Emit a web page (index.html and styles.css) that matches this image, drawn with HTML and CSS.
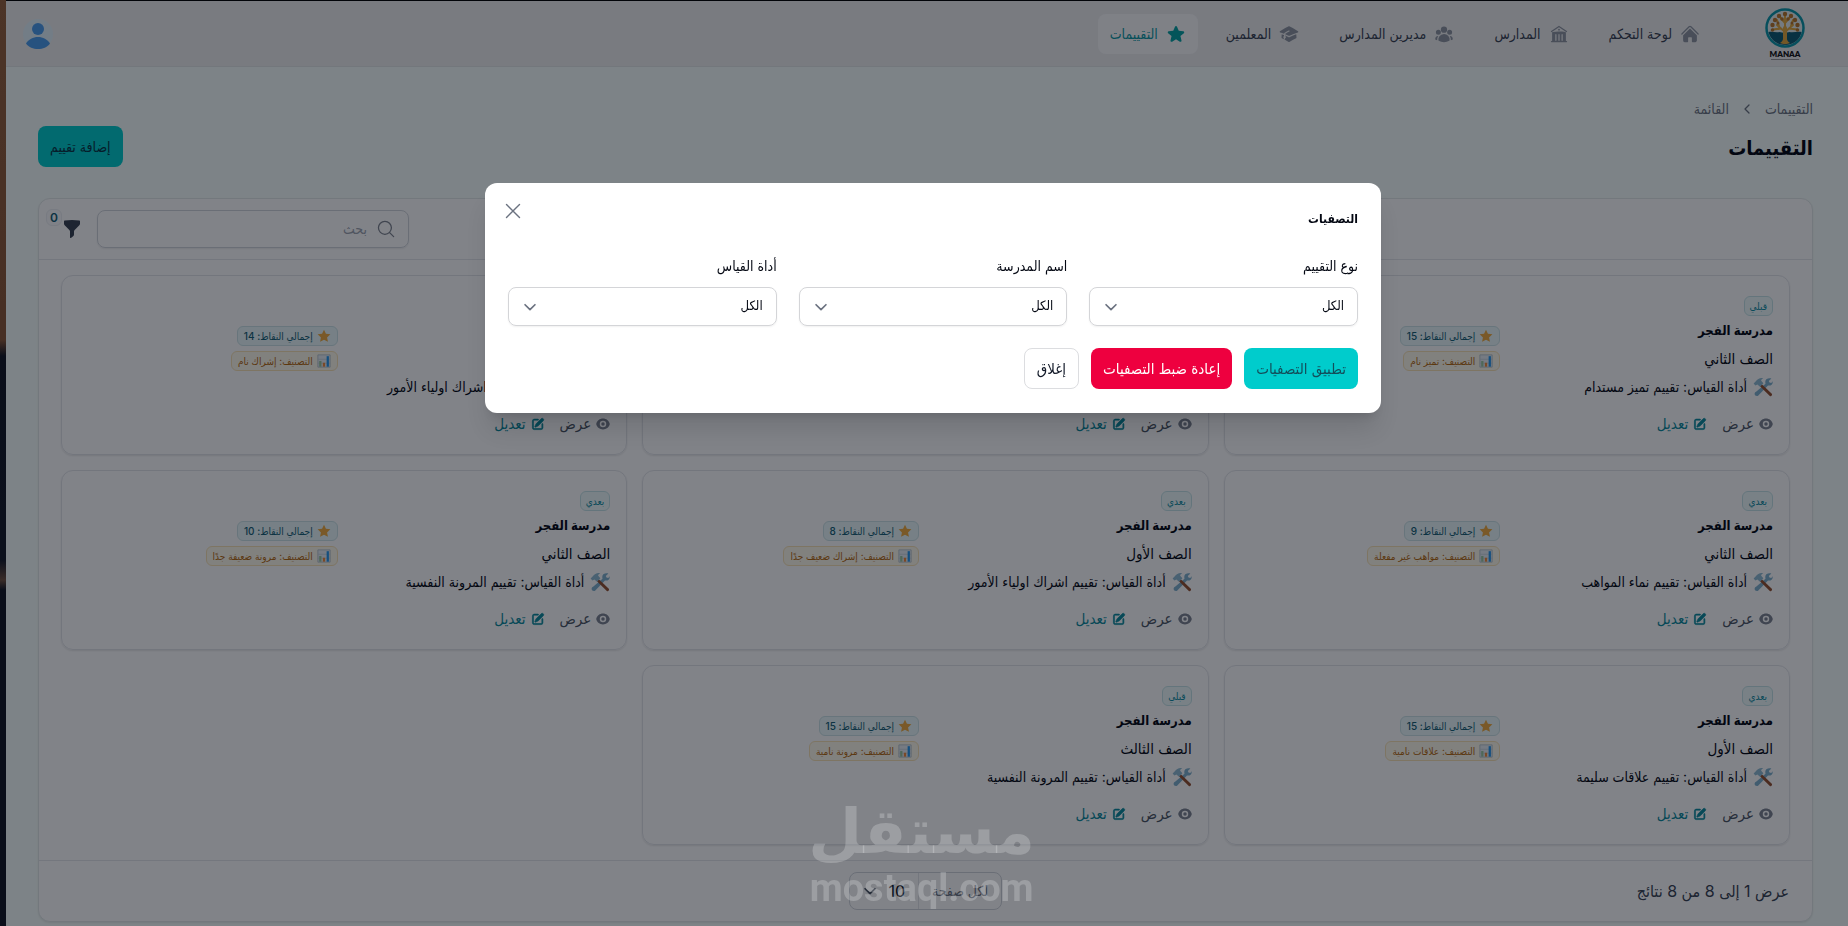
FILE: index.html
```html
<!DOCTYPE html>
<html lang="ar" dir="rtl">
<head>
<meta charset="utf-8">
<title>التقييمات</title>
<link rel="stylesheet" href="styles.css">
</head>
<body>
<svg class="sprite" aria-hidden="true">
  <symbol id="home" viewBox="0 0 24 24"><path d="M11.47 3.841a.75.75 0 0 1 1.06 0l8.69 8.69a.75.75 0 1 0 1.06-1.061l-8.689-8.69a2.25 2.25 0 0 0-3.182 0l-8.69 8.69a.75.75 0 1 0 1.061 1.06l8.69-8.689Z"/><path d="m12 5.432 8.159 8.159c.03.03.06.058.091.086v6.198c0 1.035-.84 1.875-1.875 1.875H15a.75.75 0 0 1-.75-.75v-4.5a.75.75 0 0 0-.75-.75h-3a.75.75 0 0 0-.75.75V21a.75.75 0 0 1-.75.75H5.625a1.875 1.875 0 0 1-1.875-1.875v-6.198a2.29 2.29 0 0 0 .091-.086L12 5.432Z"/></symbol>
  <symbol id="library" viewBox="0 0 24 24"><path d="M11.584 2.376a.75.75 0 0 1 .832 0l9 6a.75.75 0 1 1-.832 1.248L12 3.901 3.416 9.624a.75.75 0 0 1-.832-1.248l9-6Z"/><path fill-rule="evenodd" d="M20.25 10.332v9.918H21a.75.75 0 0 1 0 1.5H3a.75.75 0 0 1 0-1.5h.75v-9.918a.75.75 0 0 1 .634-.74A49.109 49.109 0 0 1 12 9c2.59 0 5.134.202 7.616.592a.75.75 0 0 1 .634.74Zm-7.5 2.418a.75.75 0 0 0-1.5 0v6.75a.75.75 0 0 0 1.5 0v-6.75Zm3-.75a.75.75 0 0 1 .75.75v6.75a.75.75 0 0 1-1.5 0v-6.75a.75.75 0 0 1 .75-.75ZM9 12.75a.75.75 0 0 0-1.5 0v6.75a.75.75 0 0 0 1.5 0v-6.75Z"/><path d="M12 7.875a1.125 1.125 0 1 0 0-2.25 1.125 1.125 0 0 0 0 2.25Z"/></symbol>
  <symbol id="group" viewBox="0 0 24 24"><path d="M8.25 6.75a3.75 3.75 0 1 1 7.5 0 3.75 3.75 0 0 1-7.5 0ZM15.75 9.75a3 3 0 1 1 6 0 3 3 0 0 1-6 0ZM2.25 9.75a3 3 0 1 1 6 0 3 3 0 0 1-6 0ZM6.31 15.117A6.745 6.745 0 0 1 12 12a6.745 6.745 0 0 1 6.709 7.498.75.75 0 0 1-.372.568A12.696 12.696 0 0 1 12 21.75c-2.305 0-4.47-.612-6.337-1.684a.75.75 0 0 1-.372-.568 6.787 6.787 0 0 1 1.019-4.38Z"/><path d="M5.082 14.254a8.287 8.287 0 0 0-1.308 5.135 9.687 9.687 0 0 1-1.764-.44l-.115-.04a.563.563 0 0 1-.373-.487l-.01-.121a3.75 3.75 0 0 1 3.57-4.047ZM20.226 19.389a8.287 8.287 0 0 0-1.308-5.135 3.75 3.75 0 0 1 3.57 4.047l-.01.121a.563.563 0 0 1-.373.486l-.115.04c-.567.2-1.156.349-1.764.441Z"/></symbol>
  <symbol id="cap" viewBox="0 0 24 24"><path d="M11.7 2.805a.75.75 0 0 1 .6 0A60.65 60.65 0 0 1 22.83 8.72a.75.75 0 0 1-.231 1.337 49.948 49.948 0 0 0-9.902 3.912l-.003.002c-.114.06-.227.119-.34.18a.75.75 0 0 1-.707 0A50.88 50.88 0 0 0 7.5 12.173v-.224c0-.131.067-.248.172-.311a54.615 54.615 0 0 1 4.653-2.52.75.75 0 0 0-.65-1.352 56.123 56.123 0 0 0-4.78 2.589 1.858 1.858 0 0 0-.859 1.228 49.803 49.803 0 0 0-4.634-1.527.75.75 0 0 1-.231-1.337A60.653 60.653 0 0 1 11.7 2.805Z"/><path d="M13.06 15.473a48.45 48.45 0 0 1 7.666-3.282c.134 1.414.22 2.843.255 4.284a.75.75 0 0 1-.46.711 47.87 47.87 0 0 0-8.105 4.342.75.75 0 0 1-.832 0 47.87 47.87 0 0 0-8.104-4.342.75.75 0 0 1-.461-.71c.035-1.442.121-2.87.255-4.286.921.304 1.83.634 2.726.99v1.27a1.5 1.5 0 0 0-.14 2.508c-.09.38-.222.753-.397 1.11.452.213.901.434 1.346.66a6.727 6.727 0 0 0 .551-1.607 1.5 1.5 0 0 0 .14-2.67v-.645a48.549 48.549 0 0 1 3.44 1.667 2.25 2.25 0 0 0 2.12 0Z"/></symbol>
  <symbol id="star" viewBox="0 0 24 24"><path d="M10.788 3.21c.448-1.077 1.976-1.077 2.424 0l2.082 5.006 5.404.434c1.164.093 1.636 1.545.749 2.305l-4.117 3.527 1.257 5.273c.271 1.136-.964 2.033-1.96 1.425L12 18.354 7.373 21.18c-.996.608-2.231-.29-1.96-1.425l1.257-5.273-4.117-3.527c-.887-.76-.415-2.212.749-2.305l5.404-.434 2.082-5.005Z"/></symbol>
  <symbol id="eye" viewBox="0 0 20 20"><path fill-rule="evenodd" d="M10 2.200c4.600 0 8.700 3 9.700 7.800-1 4.800-5.100 7.800-9.700 7.800S1.300 14.800.3 10C1.300 5.200 5.400 2.200 10 2.200Zm0 3.200a4.600 4.600 0 1 0 0 9.200 4.600 4.600 0 0 0 0-9.200Z"/><path d="M10 12.500a2.500 2.500 0 1 0 0-5 2.500 2.500 0 0 0 0 5Z"/></symbol>
  <symbol id="pencil" viewBox="0 0 20 20"><g stroke="currentColor" stroke-width=".9"><path d="m5.433 13.917 1.262-3.155A4 4 0 0 1 7.58 9.42l6.92-6.918a2.121 2.121 0 0 1 3 3l-6.92 6.918c-.383.383-.84.685-1.343.886l-3.154 1.262a.5.5 0 0 1-.65-.65Z"/><path d="M3.5 5.75c0-.69.56-1.25 1.25-1.25H10A.75.75 0 0 0 10 3H4.75A2.75 2.75 0 0 0 2 5.75v9.5A2.75 2.75 0 0 0 4.75 18h9.5A2.75 2.75 0 0 0 17 15.25V10a.75.75 0 0 0-1.5 0v5.25c0 .69-.56 1.25-1.25 1.25h-9.5c-.69 0-1.25-.56-1.25-1.25v-9.5Z"/></g></symbol>
  <symbol id="funnel" viewBox="0 0 20 20"><path d="M2.628 1.601C5.028 1.206 7.49 1 10 1s4.973.206 7.372.601a.75.75 0 0 1 .628.74v2.288a2.25 2.25 0 0 1-.659 1.59l-4.682 4.683a2.25 2.25 0 0 0-.659 1.59v3.037c0 .684-.31 1.33-.844 1.757l-1.937 1.55A.75.75 0 0 1 8 18.25v-5.757a2.25 2.25 0 0 0-.659-1.591L2.659 6.22A2.25 2.25 0 0 1 2 4.629V2.34a.75.75 0 0 1 .628-.74Z"/></symbol>
  <symbol id="search" viewBox="0 0 20 20"><path d="m18.5 18.5-4.2-4.2M16 8.7a7.2 7.2 0 1 1-14.4 0 7.2 7.2 0 0 1 14.4 0Z" fill="none" stroke="currentColor" stroke-width="1.4" stroke-linecap="round"/></symbol>
  <symbol id="down" viewBox="0 0 20 20"><path d="m4.5 7.5 5.5 5.5 5.5-5.5" fill="none" stroke="currentColor" stroke-width="1.9" stroke-linecap="round" stroke-linejoin="round"/></symbol>
  <symbol id="crumb" viewBox="0 0 20 20"><path d="m12.5 5-5 5 5 5" fill="none" stroke="currentColor" stroke-width="1.6" stroke-linecap="round" stroke-linejoin="round"/></symbol>
  <symbol id="close" viewBox="0 0 20 20"><path d="m3.5 3.500 13 13m0-13-13 13" fill="none" stroke="currentColor" stroke-width="1.400" stroke-linecap="round"/></symbol>
  <symbol id="gold" viewBox="0 0 16 16"><path d="m8 .8 2.2 4.700 5.1.6-3.8 3.500 1 5.100L8 12.200l-4.500 2.500 1-5.100L.7 6.100l5.100-.6Z" fill="#f0ab3e"/></symbol>
  <symbol id="chart" viewBox="0 0 16 16"><path d="M1 1h14v14H1Z" fill="#e9eff5" stroke="#b4c2cc"/><path d="M1 6h14M1 10.500h14" stroke="#c8d3dc"/><path d="M2.500 8h2.600v6.500H2.500Z" fill="#9bc8a0"/><path d="M6.700 10h2.600v4.500H6.700Z" fill="#f28b3b"/><path d="M11 2.500h2.600v12H11Z" fill="#2496ed"/></symbol>
  <symbol id="tools" viewBox="0 0 20 20"><path d="M13.300 2.200c2-1.200 3.900-.8 5.100-.7l-2.600 2.400.7 1.700 1.800.3 1.300-1.600c.6 3.200-2.200 4.900-4.600 4.100L6 17.800c-1.600 2.800-5.700.6-4-2.400.3-.5.800-.8 1.400-1l9.100-7.600c-.5-1.900-.2-3.500.8-4.600Z" fill="#7fb0cd"/><path d="m8.800 7.200 10 9.600c1 1-.8 3.200-2 2.200L7 9.300Z" fill="#94502f"/><path d="m.6 6.600 2-2C4.700 1.700 7.500.5 10.300 1.300 8.800 2 8 3 8.200 3.800l2.200 2.400-3.400 3.500-2.600-2.200-2 1Z" fill="#8ebbd2"/></symbol>
</svg>

<div class="app">
  <header class="topbar">
    <a class="brand" href="#" aria-label="MANAA">
      <svg class="brand-mark" viewBox="0 0 40 40" aria-hidden="true">
        <circle cx="20" cy="20" r="18.500" fill="#e6efee" stroke="#0b97a8" stroke-width="2.500"/>
        <path d="M3.500 24c4-1 7 1 11 0l5 1 5-1c4 1 8-1 12 0-1 7-8 13-16.500 13S5 31 3.500 24Z" fill="#0d5a72"/>
        <g fill="none" stroke="#e2a93c" stroke-linecap="round"><path d="M20 34V20" stroke-width="4"/><path d="M20 24 12 17M20 24l8-7M20 20V8M16 20.500l-8 1M24 20.500l8 1M20 15l-5-6M20 15l5-6M14 18l-2-6M26 18l2-6" stroke-width="2"/></g>
        <g fill="#b9762a"><circle cx="14" cy="8" r="2.200"/><circle cx="20" cy="6" r="2.200"/><circle cx="26" cy="8" r="2.200"/><circle cx="10" cy="12" r="2.200"/><circle cx="30" cy="12" r="2.200"/><circle cx="7.500" cy="17" r="2.200"/><circle cx="32.500" cy="17" r="2.200"/><circle cx="7.500" cy="22" r="1.800"/><circle cx="32.500" cy="22" r="1.800"/><circle cx="17" cy="11" r="1.800"/><circle cx="23" cy="11" r="1.800"/><circle cx="13" cy="15" r="1.500"/><circle cx="27" cy="15" r="1.500"/></g>
        <path d="M15 35c2-1 3-3 3.200-5h3.600c.2 2 1.200 4 3.200 5-3 1.500-7 1.500-10 0Z" fill="#e2a93c"/>
      </svg>
      <span class="brand-name">MANAA</span>
      <span class="brand-line"></span>
    </a>
    <nav class="nav">
      <a class="nav-item" href="#"><svg><use href="#home"/></svg>لوحة التحكم</a>
      <a class="nav-item" href="#"><svg><use href="#library"/></svg>المدارس</a>
      <a class="nav-item" href="#"><svg><use href="#group"/></svg>مديرين المدارس</a>
      <a class="nav-item" href="#"><svg><use href="#cap"/></svg>المعلمين</a>
      <a class="nav-item active" href="#"><svg><use href="#star"/></svg>التقييمات</a>
    </nav>
    <button class="avatar" type="button" aria-label="الحساب">
      <svg viewBox="0 0 30 30"><circle cx="15" cy="15" r="15" fill="#e2f2fb"/><circle cx="15" cy="10" r="6" fill="#4b9cec"/><path d="M3 24.500c2.500-4 7-6.500 12-6.500s9.500 2.500 12 6.500C24 28.500 20 30 15 30S6 28.500 3 24.500Z" fill="#4b9cec"/></svg>
    </button>
  </header>

  <main class="page">
    <nav class="crumbs"><a href="#">التقييمات</a><svg><use href="#crumb"/></svg><span>القائمة</span></nav>
    <div class="page-head">
      <h1>التقييمات</h1>
      <button class="btn primary add" type="button">إضافة تقييم</button>
    </div>

    <section class="panel">
      <div class="toolbar">
        <label class="search"><svg><use href="#search"/></svg><input type="search" placeholder="بحث" aria-label="بحث"></label>
        <button class="filter" type="button" aria-label="التصفيات"><svg><use href="#funnel"/></svg><span class="count">0</span></button>
      </div>

      <div class="cards">
        <article class="card">
          <div class="info"><span class="tag">قبلي</span><h2>مدرسة الفجر</h2><p class="grade">الصف الثاني</p><p><svg><use href="#tools"/></svg>أداة القياس: تقييم تميز مستدام</p></div>
          <div class="stats"><span class="chip score"><svg><use href="#gold"/></svg>إجمالي النقاط: 15</span><span class="chip rank"><svg><use href="#chart"/></svg>التصنيف: تميز نام</span></div>
          <div class="actions"><a class="view" href="#"><svg><use href="#eye"/></svg>عرض</a><a class="edit" href="#"><svg><use href="#pencil"/></svg>تعديل</a></div>
        </article>
        <article class="card">
          <div class="info"><span class="tag">قبلي</span><h2>مدرسة الفجر</h2><p class="grade">الصف الأول</p><p><svg><use href="#tools"/></svg>أداة القياس: تقييم نماء المواهب</p></div>
          <div class="stats"><span class="chip score"><svg><use href="#gold"/></svg>إجمالي النقاط: 15</span><span class="chip rank"><svg><use href="#chart"/></svg>التصنيف: تميز نام</span></div>
          <div class="actions"><a class="view" href="#"><svg><use href="#eye"/></svg>عرض</a><a class="edit" href="#"><svg><use href="#pencil"/></svg>تعديل</a></div>
        </article>
        <article class="card">
          <div class="info"><span class="tag">قبلي</span><h2>مدرسة الفجر</h2><p class="grade">الصف الأول</p><p><svg><use href="#tools"/></svg>أداة القياس: تقييم اشراك اولياء الأمور</p></div>
          <div class="stats"><span class="chip score"><svg><use href="#gold"/></svg>إجمالي النقاط: 14</span><span class="chip rank"><svg><use href="#chart"/></svg>التصنيف: إشراك نام</span></div>
          <div class="actions"><a class="view" href="#"><svg><use href="#eye"/></svg>عرض</a><a class="edit" href="#"><svg><use href="#pencil"/></svg>تعديل</a></div>
        </article>
        <article class="card">
          <div class="info"><span class="tag">بعدي</span><h2>مدرسة الفجر</h2><p class="grade">الصف الثاني</p><p><svg><use href="#tools"/></svg>أداة القياس: تقييم نماء المواهب</p></div>
          <div class="stats"><span class="chip score"><svg><use href="#gold"/></svg>إجمالي النقاط: 9</span><span class="chip rank"><svg><use href="#chart"/></svg>التصنيف: مواهب غير مفعلة</span></div>
          <div class="actions"><a class="view" href="#"><svg><use href="#eye"/></svg>عرض</a><a class="edit" href="#"><svg><use href="#pencil"/></svg>تعديل</a></div>
        </article>
        <article class="card">
          <div class="info"><span class="tag">بعدي</span><h2>مدرسة الفجر</h2><p class="grade">الصف الأول</p><p><svg><use href="#tools"/></svg>أداة القياس: تقييم اشراك اولياء الأمور</p></div>
          <div class="stats"><span class="chip score"><svg><use href="#gold"/></svg>إجمالي النقاط: 8</span><span class="chip rank"><svg><use href="#chart"/></svg>التصنيف: إشراك ضعيف جدًا</span></div>
          <div class="actions"><a class="view" href="#"><svg><use href="#eye"/></svg>عرض</a><a class="edit" href="#"><svg><use href="#pencil"/></svg>تعديل</a></div>
        </article>
        <article class="card">
          <div class="info"><span class="tag">بعدي</span><h2>مدرسة الفجر</h2><p class="grade">الصف الثاني</p><p><svg><use href="#tools"/></svg>أداة القياس: تقييم المرونة النفسية</p></div>
          <div class="stats"><span class="chip score"><svg><use href="#gold"/></svg>إجمالي النقاط: 10</span><span class="chip rank"><svg><use href="#chart"/></svg>التصنيف: مرونة ضعيفة جدًا</span></div>
          <div class="actions"><a class="view" href="#"><svg><use href="#eye"/></svg>عرض</a><a class="edit" href="#"><svg><use href="#pencil"/></svg>تعديل</a></div>
        </article>
        <article class="card">
          <div class="info"><span class="tag">بعدي</span><h2>مدرسة الفجر</h2><p class="grade">الصف الأول</p><p><svg><use href="#tools"/></svg>أداة القياس: تقييم علاقات سليمة</p></div>
          <div class="stats"><span class="chip score"><svg><use href="#gold"/></svg>إجمالي النقاط: 15</span><span class="chip rank"><svg><use href="#chart"/></svg>التصنيف: علاقات نامية</span></div>
          <div class="actions"><a class="view" href="#"><svg><use href="#eye"/></svg>عرض</a><a class="edit" href="#"><svg><use href="#pencil"/></svg>تعديل</a></div>
        </article>
        <article class="card">
          <div class="info"><span class="tag">قبلي</span><h2>مدرسة الفجر</h2><p class="grade">الصف الثالث</p><p><svg><use href="#tools"/></svg>أداة القياس: تقييم المرونة النفسية</p></div>
          <div class="stats"><span class="chip score"><svg><use href="#gold"/></svg>إجمالي النقاط: 15</span><span class="chip rank"><svg><use href="#chart"/></svg>التصنيف: مرونة نامية</span></div>
          <div class="actions"><a class="view" href="#"><svg><use href="#eye"/></svg>عرض</a><a class="edit" href="#"><svg><use href="#pencil"/></svg>تعديل</a></div>
        </article>
      </div>

      <footer class="pager">
        <span class="summary">عرض 1 إلى 8 من 8 نتائج</span>
        <div class="per-page">
          <label for="per-page">لكل صفحة</label>
          <div class="select-wrap"><select id="per-page"><option>10</option></select><svg><use href="#down"/></svg></div>
        </div>
        <span></span>
      </footer>
    </section>
  </main>
</div>

<div class="overlay">
  <section class="modal" role="dialog" aria-modal="true" aria-labelledby="modal-title">
    <button class="modal-close" type="button" aria-label="إغلاق"><svg><use href="#close"/></svg></button>
    <h2 id="modal-title">التصفيات</h2>
    <div class="fields">
      <div class="field"><label for="f-type">نوع التقييم</label><div class="select-wrap"><select id="f-type"><option>الكل</option></select><svg><use href="#down"/></svg></div></div>
      <div class="field"><label for="f-school">اسم المدرسة</label><div class="select-wrap"><select id="f-school"><option>الكل</option></select><svg><use href="#down"/></svg></div></div>
      <div class="field"><label for="f-tool">أداة القياس</label><div class="select-wrap"><select id="f-tool"><option>الكل</option></select><svg><use href="#down"/></svg></div></div>
    </div>
    <div class="modal-actions">
      <button class="btn primary" type="button">تطبيق التصفيات</button>
      <button class="btn danger" type="button">إعادة ضبط التصفيات</button>
      <button class="btn plain" type="button">إغلاق</button>
    </div>
  </section>
</div>

<div class="watermark" aria-hidden="true"><span class="wm-ar">مستقل</span><span class="wm-en" dir="ltr">mostaql.com</span></div>
</body>
</html>
```
FILE: styles.css
```css
* { box-sizing: border-box; }

html {
  height: 100%;
  overflow: hidden;
}

body {
  margin: 0;
  min-height: 100%;
  font-family: Inter, "DejaVu Sans Condensed", "DejaVu Sans", sans-serif;
  font-size: 14px;
  line-height: 20px;
  color: #030712;
  background: linear-gradient(#94603c 0, #8a5636 340px, #101522 356px, #131927 560px, #70513f 580px, #101522 590px);
}

button, input, select { font: inherit; color: inherit; }
button { cursor: pointer; }
a { color: inherit; text-decoration: none; }
h1, h2, p { margin: 0; }
svg { display: block; flex: none; fill: currentColor; }
.sprite { position: absolute; width: 0; height: 0; }

.app {
  margin-left: 6px;
  min-height: 100vh;
  border-top: 1px solid #000;
  background: #f7fffc;
}

/* Top bar */
.topbar {
  display: flex;
  align-items: center;
  height: 66px;
  padding: 0 43px 0 17px;
  background: #efefef;
  border-bottom: 1px solid #e2e6e6;
}
.brand {
  display: flex;
  flex-direction: column;
  align-items: center;
  width: 40px;
  margin-left: 53px;
}
.brand-mark { width: 40px; height: 40px; }
.brand-name { margin-top: 2px; font: 800 8px/9px Lato, sans-serif; color: #111; }
.brand-line { width: 28px; border-top: 1px solid #999; }
.nav { display: flex; gap: 16px; }
.nav-item {
  display: flex;
  align-items: center;
  gap: 8px;
  padding: 10px 12px;
  border-radius: 8px;
  white-space: nowrap;
  color: #374151;
}
.nav-item svg { width: 20px; height: 20px; color: #8e95a1; }
.nav-item.active { background: #fafafb; color: #0a98a3; }
.nav-item.active svg { color: #04a3a3; }
.avatar {
  width: 30px;
  height: 30px;
  margin-right: auto;
  padding: 0;
  border: 0;
  background: none;
}

/* Page */
.page { padding: 32px 35px 0 32px; }
.crumbs {
  display: flex;
  align-items: center;
  gap: 10px;
  color: #6b7280;
}
.crumbs svg { width: 16px; height: 16px; }
.page-head {
  display: flex;
  justify-content: space-between;
  align-items: flex-start;
  height: 79px;
}
h1 { font-size: 20px; line-height: 36px; margin-top: 11px; }

.btn {
  padding: 10px 12px;
  border: 0;
  border-radius: 8px;
  white-space: nowrap;
  line-height: 21px;
}
.btn.primary { background: #00cccc; color: #134e5a; }
.btn.add { margin-top: 7px; color: #083344; }
.btn.danger { background: #ee003f; color: #fff; }
.btn.plain { padding: 9px 12px; background: #fff; color: #111827; border: 1px solid #dcdde0; }

.panel {
  border: 1px solid #e3e9e9;
  border-radius: 12px;
  background: #fff;
  box-shadow: 0 1px 2px rgba(0, 0, 0, .08);
}
.toolbar {
  display: flex;
  justify-content: flex-end;
  align-items: center;
  height: 61px;
  padding-left: 19px;
  border-bottom: 1px solid #e5e7eb;
}
.search {
  display: flex;
  align-items: center;
  gap: 10px;
  width: 312px;
  height: 38px;
  padding: 0 13px;
  border: 1px solid #d1d5db;
  border-radius: 8px;
  box-shadow: 0 1px 2px rgba(0, 0, 0, .08);
}
.search svg { width: 18px; height: 18px; color: #7d838e; }
.search input {
  flex: 1;
  min-width: 0;
  padding: 0;
  border: 0;
  outline: 0;
  background: none;
}
.search input::placeholder { color: #9ca3af; }
.filter {
  position: relative;
  margin: 0 11px 0 0;
  padding: 4px;
  border: 0;
  background: none;
}
.filter svg { width: 20px; height: 20px; color: #374151; }
.count {
  position: absolute;
  left: -12px;
  top: -6px;
  min-width: 16px;
  border: 1px solid #eceef2;
  border-radius: 6px;
  background: #fbfbfc;
  font-size: 12px;
  line-height: 15px;
  font-weight: 600;
  color: #155e75;
}

.cards {
  display: grid;
  grid-template-columns: repeat(3, 1fr);
  gap: 15px;
  padding: 15px 22px;
}
.card {
  display: grid;
  grid-template-columns: 1fr 1fr;
  column-gap: 12px;
  padding: 20px 16px 20px 15px;
  border: 1px solid #e3e5e9;
  border-radius: 12px;
  box-shadow: 0 1px 2px rgba(0, 0, 0, .1);
}
.tag {
  display: block;
  width: fit-content;
  padding: 0 5px;
  border: 1px solid #c5e3e7;
  border-radius: 6px;
  background: #effbfb;
  font-size: 10px;
  line-height: 18px;
  color: #0e8ba0;
}
.card h2 { font-size: 13px; line-height: 29px; }
.info p {
  display: flex;
  align-items: center;
  gap: 6px;
  line-height: 28px;
  white-space: nowrap;
}
.info .grade { font-size: 15px; }
.info p svg { width: 20px; height: 20px; }
.stats {
  display: flex;
  flex-direction: column;
  align-items: flex-start;
  gap: 5px;
  padding-top: 30px;
}
.chip {
  display: flex;
  align-items: center;
  gap: 4px;
  padding: 0 6px;
  border: 1px solid;
  border-radius: 6px;
  font-size: 10px;
  line-height: 18px;
  white-space: nowrap;
}
.chip svg { width: 14px; height: 14px; }
.score { background: #eaf9fa; border-color: #cce3e6; color: #155e75; font-weight: 500; }
.rank { background: #fffaeb; border-color: #f8e3b5; color: #b4690e; }
.actions { display: flex; gap: 15px; grid-column: 1 / -1; padding-top: 13px; font-size: 15px; }
.actions a { display: flex; align-items: center; gap: 5px; }
.actions svg { width: 14px; height: 14px; }
.view { color: #4b5563; }
.view svg { color: #7c8390; }
.edit { color: #0a8a9c; }

.select-wrap { position: relative; }
.select-wrap select {
  appearance: none;
  display: block;
  width: 100%;
  outline: 0;
  background: none;
}
.select-wrap svg {
  position: absolute;
  top: 50%;
  transform: translateY(-50%);
  pointer-events: none;
}

.pager {
  display: grid;
  grid-template-columns: 1fr auto 1fr;
  align-items: center;
  height: 61px;
  padding: 0 23px;
  border-top: 1px solid #e5e7eb;
}
.summary { font-size: 16px; color: #374151; }
.per-page {
  display: flex;
  align-items: center;
  width: 153px;
  height: 38px;
  border: 1px solid #d1d5db;
  border-radius: 8px;
}
.per-page label { flex: 1; text-align: center; color: #6b7280; border-left: 1px solid #e5e7eb; line-height: 36px; }
.per-page .select-wrap { width: 68px; }
.per-page select { border: 0; padding: 0 13px; line-height: 36px; font-size: 16px; }
.per-page svg { left: 11px; width: 18px; height: 18px; color: #4b5563; }

/* Filter dialog */
.overlay {
  position: fixed;
  inset: 0;
  padding: 183px 0 0 18px;
  background: rgba(3, 7, 18, .5);
}
.modal {
  position: relative;
  width: 100%;
  max-width: 896px;
  margin: 0 auto;
  padding: 24px 23px;
  border-radius: 12px;
  background: #fff;
  box-shadow: 0 20px 25px -5px rgba(0, 0, 0, .12), 0 8px 10px -6px rgba(0, 0, 0, .12);
}
.modal-close {
  position: absolute;
  left: 18px;
  top: 18px;
  padding: 0;
  border: 0;
  background: none;
}
.modal-close svg { width: 20px; height: 20px; color: #6b7280; }
.modal h2 { font-size: 12px; line-height: 24px; }
.fields {
  display: grid;
  grid-template-columns: repeat(3, 1fr);
  gap: 22px;
  margin-top: 23px;
}
.field { display: grid; gap: 9px; line-height: 24px; }
.field select {
  height: 39px;
  padding: 0 13px 3px;
  border: 1px solid #d4d5d8;
  border-radius: 8px;
  font-size: 13px;
  box-shadow: 0 1px 2px rgba(0, 0, 0, .06);
}
.field .select-wrap svg { left: 13px; width: 18px; height: 18px; color: #6b7280; }
.modal-actions { display: flex; gap: 12px; margin-top: 22px; font-size: 15px; }

.watermark {
  position: fixed;
  left: 813px;
  top: 795px;
  width: 222px;
  display: grid;
  justify-items: center;
  color: rgba(255, 255, 255, .22);
  pointer-events: none;
}
.wm-ar { font: 700 62px/74px "DejaVu Sans", sans-serif; }
.wm-en { font: 700 38px/38px Roboto, sans-serif; }
```
